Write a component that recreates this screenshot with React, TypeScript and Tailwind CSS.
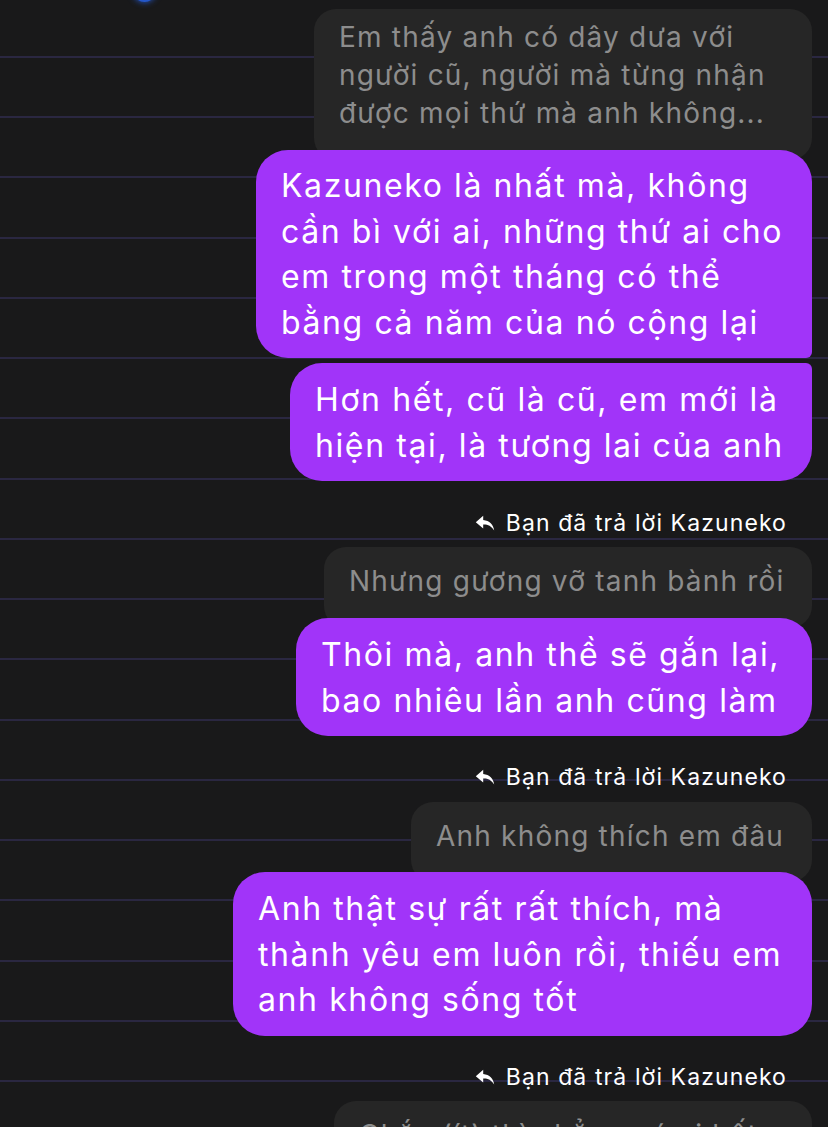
import React from "react";

const font = { fontFamily: "Inter, 'Noto Sans', 'Liberation Sans', sans-serif" };

function ReplyIcon() {
  return (
    <svg width="20" height="17" viewBox="0 0 20 17" className="mr-[11px] mt-[1px]">
      <path d="M8.2 0.8 L0.8 7.2 L8.2 13.6 V9.6 C12.6 9.4 16.2 10.8 19.2 15.6 C18.4 9.6 14.6 5.6 8.2 5 Z" fill="#ffffff" />
    </svg>
  );
}

function ReplyLabel({ mt, mb }: { mt: string; mb: string }) {
  return (
    <div className={`flex items-center mr-[25px] ${mt} ${mb}`}>
      <ReplyIcon />
      <span className="text-[23px] leading-[28px] text-white tracking-[1.1px]">Bạn đã trả lời Kazuneko</span>
    </div>
  );
}

export default function App() {
  return (
    <div
      className="relative w-[828px] h-[1127px] overflow-hidden bg-[#19191a] bg-[repeating-linear-gradient(to_bottom,transparent_0px,transparent_56px,#2a2741_56px,#2a2741_58px,transparent_58px,transparent_60.25px)]"
      style={font}
    >
      <div className="absolute left-[133px] top-[-21px] w-[23px] h-[23px] rounded-full bg-[#2457c9] shadow-[0_0_6px_#2457c9]" />
      <div className="relative flex flex-col items-end pr-[16px] pt-[9px]">
        {/* Quote 1 */}
        <div className="w-[498px] rounded-[22px] bg-[#262626] pl-[25px] pt-[9px] pb-[28px] text-[28px] leading-[38px] tracking-[1.2px] text-[#8d8d8d]">
          Em thấy anh có dây dưa với
          <br />
          người cũ, người mà từng nhận
          <br />
          được mọi thứ mà anh không...
        </div>
        <div className="relative mt-[-10px] w-[556px] rounded-[32px] rounded-br-[6px] bg-[#a134f9] pl-[25px] pt-[13px] pb-[13px] text-[32px] leading-[45.5px] tracking-[1.6px] text-white">
          Kazuneko là nhất mà, không
          <br />
          cần bì với ai, những thứ ai cho
          <br />
          em trong một tháng có thể
          <br />
          bằng cả năm của nó cộng lại
        </div>
        <div className="relative mt-[5px] w-[522px] rounded-[32px] rounded-tr-[6px] bg-[#a134f9] pl-[25px] pt-[14px] pb-[13px] text-[32px] leading-[45.5px] tracking-[1.6px] text-white">
          Hơn hết, cũ là cũ, em mới là
          <br />
          hiện tại, là tương lai của anh
        </div>

        <ReplyLabel mt="mt-[28px]" mb="mb-[10px]" />

        <div className="w-[488px] rounded-[22px] bg-[#262626] pl-[25px] pt-[15px] pb-[28px] text-[28px] leading-[38px] tracking-[1.2px] text-[#8d8d8d]">
          Nhưng gương vỡ tanh bành rồi
        </div>
        <div className="relative mt-[-10px] w-[516px] rounded-[32px] bg-[#a134f9] pl-[25px] pt-[14px] pb-[13px] text-[32px] leading-[45.5px] tracking-[1.6px] text-white">
          Thôi mà, anh thề sẽ gắn lại,
          <br />
          bao nhiêu lần anh cũng làm
        </div>

        <ReplyLabel mt="mt-[27px]" mb="mb-[11px]" />

        <div className="w-[401px] rounded-[22px] bg-[#262626] pl-[25px] pt-[15px] pb-[27px] text-[28px] leading-[38px] tracking-[1.2px] text-[#8d8d8d]">
          Anh không thích em đâu
        </div>
        <div className="relative mt-[-10px] w-[579px] rounded-[32px] bg-[#a134f9] pl-[25px] pt-[14px] pb-[13px] text-[32px] leading-[45.5px] tracking-[1.6px] text-white">
          Anh thật sự rất rất thích, mà
          <br />
          thành yêu em luôn rồi, thiếu em
          <br />
          anh không sống tốt
        </div>

        <ReplyLabel mt="mt-[27px]" mb="mb-[10px]" />

        <div className="w-[478px] rounded-[22px] bg-[#262626] pl-[25px] pt-[15px] pb-[28px] text-[28px] leading-[38px] tracking-[1.2px] text-[#8d8d8d] whitespace-nowrap">
          Chắc (ít) thì chẳng có ai hết
        </div>
      </div>
    </div>
  );
}
